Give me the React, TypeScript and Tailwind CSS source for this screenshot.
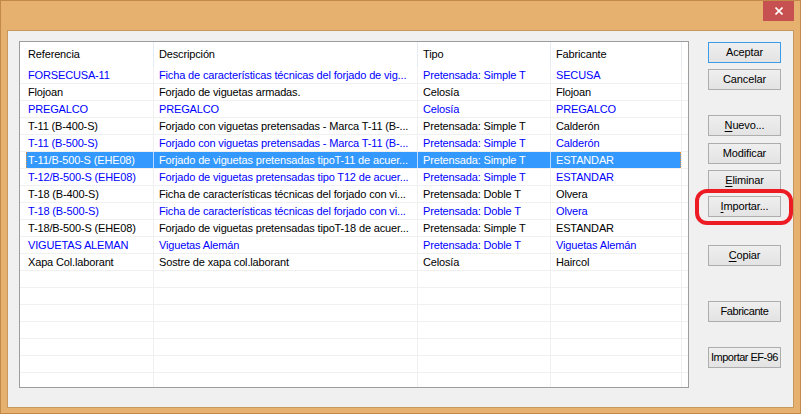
import React from "react";

type Row = {
  ref: string;
  desc: string;
  tipo: string;
  fab: string;
  blue?: boolean;
  selected?: boolean;
};

const rows: Row[] = [
  { ref: "FORSECUSA-11", desc: "Ficha de características técnicas del forjado de vig...", tipo: "Pretensada: Simple T", fab: "SECUSA", blue: true },
  { ref: "Flojoan", desc: "Forjado de viguetas armadas.", tipo: "Celosía", fab: "Flojoan" },
  { ref: "PREGALCO", desc: "PREGALCO", tipo: "Celosía", fab: "PREGALCO", blue: true },
  { ref: "T-11 (B-400-S)", desc: "Forjado con viguetas pretensadas - Marca T-11 (B-...", tipo: "Pretensada: Simple T", fab: "Calderón" },
  { ref: "T-11 (B-500-S)", desc: "Forjado con viguetas pretensadas - Marca T-11 (B-...", tipo: "Pretensada: Simple T", fab: "Calderón", blue: true },
  { ref: "T-11/B-500-S (EHE08)", desc: "Forjado de viguetas pretensadas tipoT-11 de acuer...", tipo: "Pretensada: Simple T", fab: "ESTANDAR", selected: true },
  { ref: "T-12/B-500-S (EHE08)", desc: "Forjado de viguetas pretensadas tipo T12 de acuer...", tipo: "Pretensada: Simple T", fab: "ESTANDAR", blue: true },
  { ref: "T-18 (B-400-S)", desc: "Ficha de características técnicas del forjado con vi...", tipo: "Pretensada: Doble T", fab: "Olvera" },
  { ref: "T-18 (B-500-S)", desc: "Ficha de características técnicas del forjado con vi...", tipo: "Pretensada: Doble T", fab: "Olvera", blue: true },
  { ref: "T-18/B-500-S (EHE08)", desc: "Forjado de viguetas pretensadas tipoT-18 de acuer...", tipo: "Pretensada: Simple T", fab: "ESTANDAR" },
  { ref: "VIGUETAS ALEMAN", desc: "Viguetas Alemán", tipo: "Pretensada: Doble T", fab: "Viguetas Alemán", blue: true },
  { ref: "Xapa Col.laborant", desc: "Sostre de xapa col.laborant", tipo: "Celosía", fab: "Haircol" },
];

function Button({
  children,
  className = "",
  primary = false,
}: {
  children: React.ReactNode;
  className?: string;
  primary?: boolean;
}) {
  return (
    <div
      className={`h-[21px] w-[73px] flex items-center justify-center border bg-gradient-to-b from-[#efefef] to-[#e3e3e3] text-black whitespace-nowrap ${
        primary ? "border-[#3c9be6]" : "border-[#adadad]"
      } ${className}`}
    >
      {children}
    </div>
  );
}

function DataRow({ row }: { row: Row }) {
  const color = row.selected ? "text-white" : row.blue ? "text-[#0000ff]" : "text-black";
  const line = row.selected ? "border-[#b9dcff]" : "border-[#f0f0f0]";
  const bg = row.selected ? "bg-[#3399ff]" : "";
  return (
    <div className="relative flex h-[17px] border-b border-[#f0f0f0] shrink-0">
      {/* Referencia */}
      <div className={`w-[134px] shrink-0 border-r ${line} flex`}>
        <div className={`ml-[6px] flex-1 flex items-center pl-[2px] overflow-hidden whitespace-nowrap ${bg} ${color}`}>
          {row.ref}
        </div>
      </div>
      <div className={`w-[264px] shrink-0 border-r ${line} flex items-center pl-[5px] overflow-hidden whitespace-nowrap ${bg} ${color}`}>
        {row.desc}
      </div>
      <div className={`w-[133px] shrink-0 border-r ${line} flex items-center pl-[5px] overflow-hidden whitespace-nowrap ${bg} ${color}`}>
        {row.tipo}
      </div>
      <div className={`w-[131px] shrink-0 border-r border-[#f0f0f0] flex items-center pl-[5px] overflow-hidden whitespace-nowrap ${bg} ${color}`}>
        {row.fab}
      </div>
      <div className="flex-1" />
      {row.selected && (
        <div className="absolute left-[6px] top-0 h-[16px] w-[655px] border-x border-dotted border-[#e0913f] pointer-events-none" />
      )}
    </div>
  );
}

function EmptyRow() {
  return (
    <div className="flex h-[17px] border-b border-[#f0f0f0] shrink-0">
      <div className="w-[134px] shrink-0 border-r border-[#f0f0f0]" />
      <div className="w-[264px] shrink-0 border-r border-[#f0f0f0]" />
      <div className="w-[133px] shrink-0 border-r border-[#f0f0f0]" />
      <div className="w-[131px] shrink-0 border-r border-[#f0f0f0]" />
      <div className="flex-1" />
    </div>
  );
}

export default function App() {
  return (
    <div className="relative w-[801px] h-[414px] bg-[#e6b06e] border border-[#c2894a] flex flex-col font-['Liberation_Sans',Arial,sans-serif] text-[11px] tracking-[-0.15px] text-black overflow-hidden">
      {/* ── Title bar ── */}
      <div className="h-[29px] shrink-0 flex justify-end pr-[6px]">
        <div className="w-[31px] h-[20px] bg-[#c75050] flex items-center justify-center">
          <svg width="8" height="8" viewBox="0 0 8 8">
            <path d="M0.5 0.5 L7.5 7.5 M7.5 0.5 L0.5 7.5" stroke="#fff" strokeWidth="1.6" fill="none" />
          </svg>
        </div>
      </div>

      {/* ── Client area ── */}
      <div className="mx-[6px] mb-[5px] flex-1 border border-[#c8975c] bg-[#f0f0f0] flex items-start pl-[11px] pt-[10px]">
        {/* List */}
        <div className="w-[670px] h-[347px] shrink-0 border border-[#9d9d9d] bg-white flex flex-col overflow-hidden">
          <div className="flex h-[25px] shrink-0">
            <div className="w-[134px] shrink-0 border-r border-[#e3ebf5] flex items-center pl-[8px]">Referencia</div>
            <div className="w-[264px] shrink-0 border-r border-[#e3ebf5] flex items-center pl-[5px]">Descripción</div>
            <div className="w-[133px] shrink-0 border-r border-[#e3ebf5] flex items-center pl-[5px]">Tipo</div>
            <div className="w-[131px] shrink-0 border-r border-[#e3ebf5] flex items-center pl-[5px]">Fabricante</div>
            <div className="flex-1" />
          </div>
          {rows.map((r) => (
            <DataRow key={r.ref} row={r} />
          ))}
          {Array.from({ length: 7 }).map((_, i) => (
            <EmptyRow key={i} />
          ))}
        </div>

        {/* Buttons */}
        <div className="ml-[19px] w-[73px] shrink-0 flex flex-col">
          <Button primary className="mt-[1px]">Aceptar</Button>
          <Button className="mt-[6px]">Cancelar</Button>
          <Button className="mt-[25px]">
            <span><u className="underline-offset-2">N</u>uevo...</span>
          </Button>
          <Button className="mt-[7px]">Modificar</Button>
          <Button className="mt-[6px]">
            <span><u className="underline-offset-2">E</u>liminar</span>
          </Button>
          <Button className="mt-[5px]">
            <span><u className="underline-offset-2">I</u>mportar...</span>
          </Button>
          <Button className="mt-[28px]">
            <span><u className="underline-offset-2">C</u>opiar</span>
          </Button>
          <Button className="mt-[35px] tracking-[-0.4px]">Fabricante</Button>
          <Button className="mt-[25px] tracking-[-0.5px]">Importar EF-96</Button>
        </div>
      </div>

      {/* Red annotation around Importar... */}
      <div className="absolute left-[694px] top-[188px] w-[98px] h-[36px] border-[4px] border-[#ed1c24] rounded-[12px] pointer-events-none" />
    </div>
  );
}
